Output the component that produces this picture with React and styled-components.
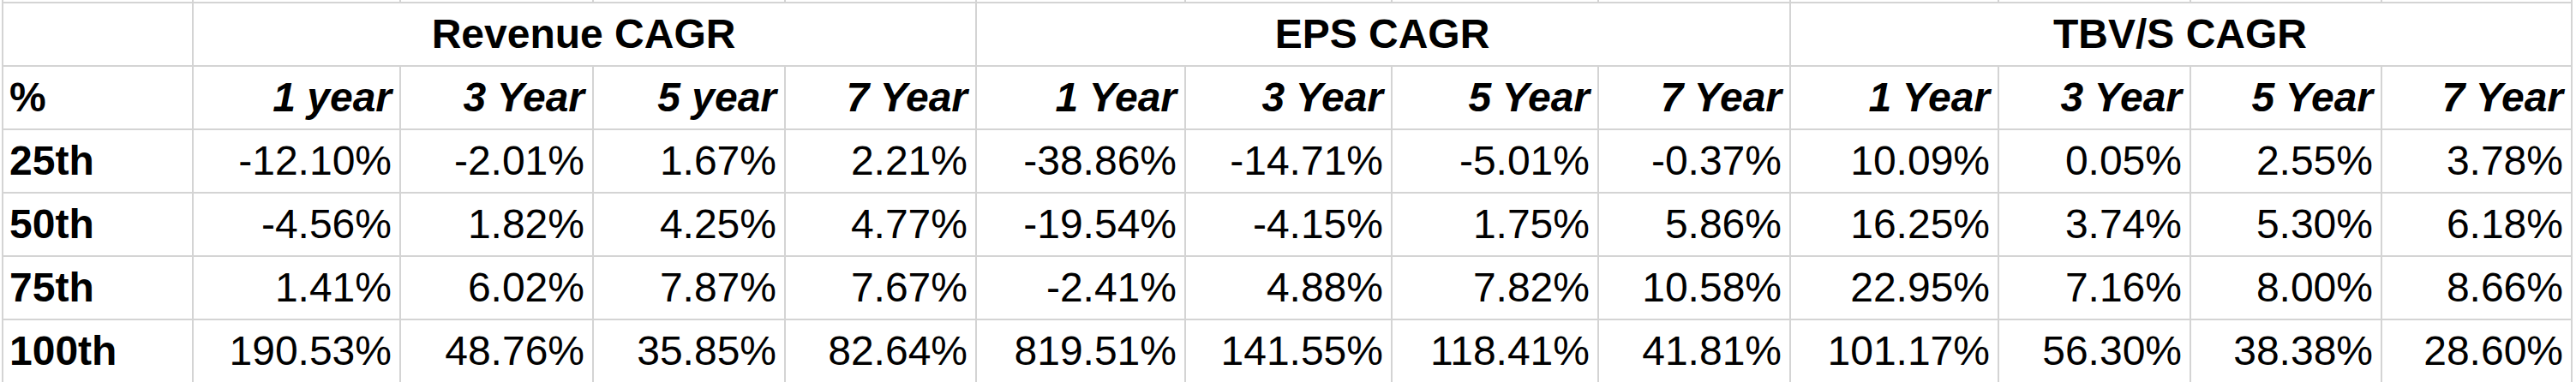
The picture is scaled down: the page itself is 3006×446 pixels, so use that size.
import React from 'react';
import styled, { createGlobalStyle } from 'styled-components';

const GlobalStyle = createGlobalStyle`
  html, body {
    margin: 0;
    padding: 0;
    background: #fff;
  }
  body {
    font-family: "Liberation Sans", Arial, sans-serif;
    color: #000;
  }
`;

// column widths, each one includes its 2px right gridline
const COLUMNS = [222, 242, 225, 224, 223, 244, 241, 241, 224, 243, 224, 223, 222];

const Sheet = styled.div`
  display: grid;
  grid-template-columns: ${COLUMNS.map(w => `${w}px`).join(' ')};
  grid-template-rows: 2px repeat(6, 74px);
  margin-left: 2px;
  border-left: 2px solid #d4d4d4;
  width: max-content;
`;

// sliver of the row above, cut by the top of the frame
const Stub = styled.div`
  border-right: 2px solid #d4d4d4;
`;

const Cell = styled.div`
  display: flex;
  align-items: flex-end;
  justify-content: ${p =>
    p.align === 'center' ? 'center' : p.align === 'left' ? 'flex-start' : 'flex-end'};
  grid-column: ${p => (p.span ? `span ${p.span}` : 'auto')};
  border-top: 2px solid #d4d4d4;
  border-right: 2px solid #d4d4d4;
  padding: 0 9px 12px 7px;
  font-size: 48px;
  line-height: 1;
  font-weight: ${p => (p.bold ? 700 : 400)};
  font-style: ${p => (p.italic ? 'italic' : 'normal')};
  white-space: nowrap;
`;

const groups = ['Revenue CAGR', 'EPS CAGR', 'TBV/S CAGR'];

const periods = [
  '1 year', '3 Year', '5 year', '7 Year',
  '1 Year', '3 Year', '5 Year', '7 Year',
  '1 Year', '3 Year', '5 Year', '7 Year'
];

const rows = [
  {
    label: '25th',
    values: ['-12.10%', '-2.01%', '1.67%', '2.21%', '-38.86%', '-14.71%', '-5.01%', '-0.37%', '10.09%', '0.05%', '2.55%', '3.78%']
  },
  {
    label: '50th',
    values: ['-4.56%', '1.82%', '4.25%', '4.77%', '-19.54%', '-4.15%', '1.75%', '5.86%', '16.25%', '3.74%', '5.30%', '6.18%']
  },
  {
    label: '75th',
    values: ['1.41%', '6.02%', '7.87%', '7.67%', '-2.41%', '4.88%', '7.82%', '10.58%', '22.95%', '7.16%', '8.00%', '8.66%']
  },
  {
    label: '100th',
    values: ['190.53%', '48.76%', '35.85%', '82.64%', '819.51%', '141.55%', '118.41%', '41.81%', '101.17%', '56.30%', '38.38%', '28.60%']
  }
];

const App = () => (
  <>
    <GlobalStyle />
    <Sheet>
      {COLUMNS.map((w, i) => (
        <Stub key={`stub-${i}`} />
      ))}

      <Cell />
      {groups.map(g => (
        <Cell key={g} span={4} align="center" bold>
          {g}
        </Cell>
      ))}

      <Cell align="left" bold>
        %
      </Cell>
      {periods.map((p, i) => (
        <Cell key={`p-${i}`} bold italic>
          {p}
        </Cell>
      ))}

      {rows.map(row => (
        <React.Fragment key={row.label}>
          <Cell align="left" bold>
            {row.label}
          </Cell>
          {row.values.map((v, i) => (
            <Cell key={`${row.label}-${i}`}>{v}</Cell>
          ))}
        </React.Fragment>
      ))}
    </Sheet>
  </>
);

export default App;
